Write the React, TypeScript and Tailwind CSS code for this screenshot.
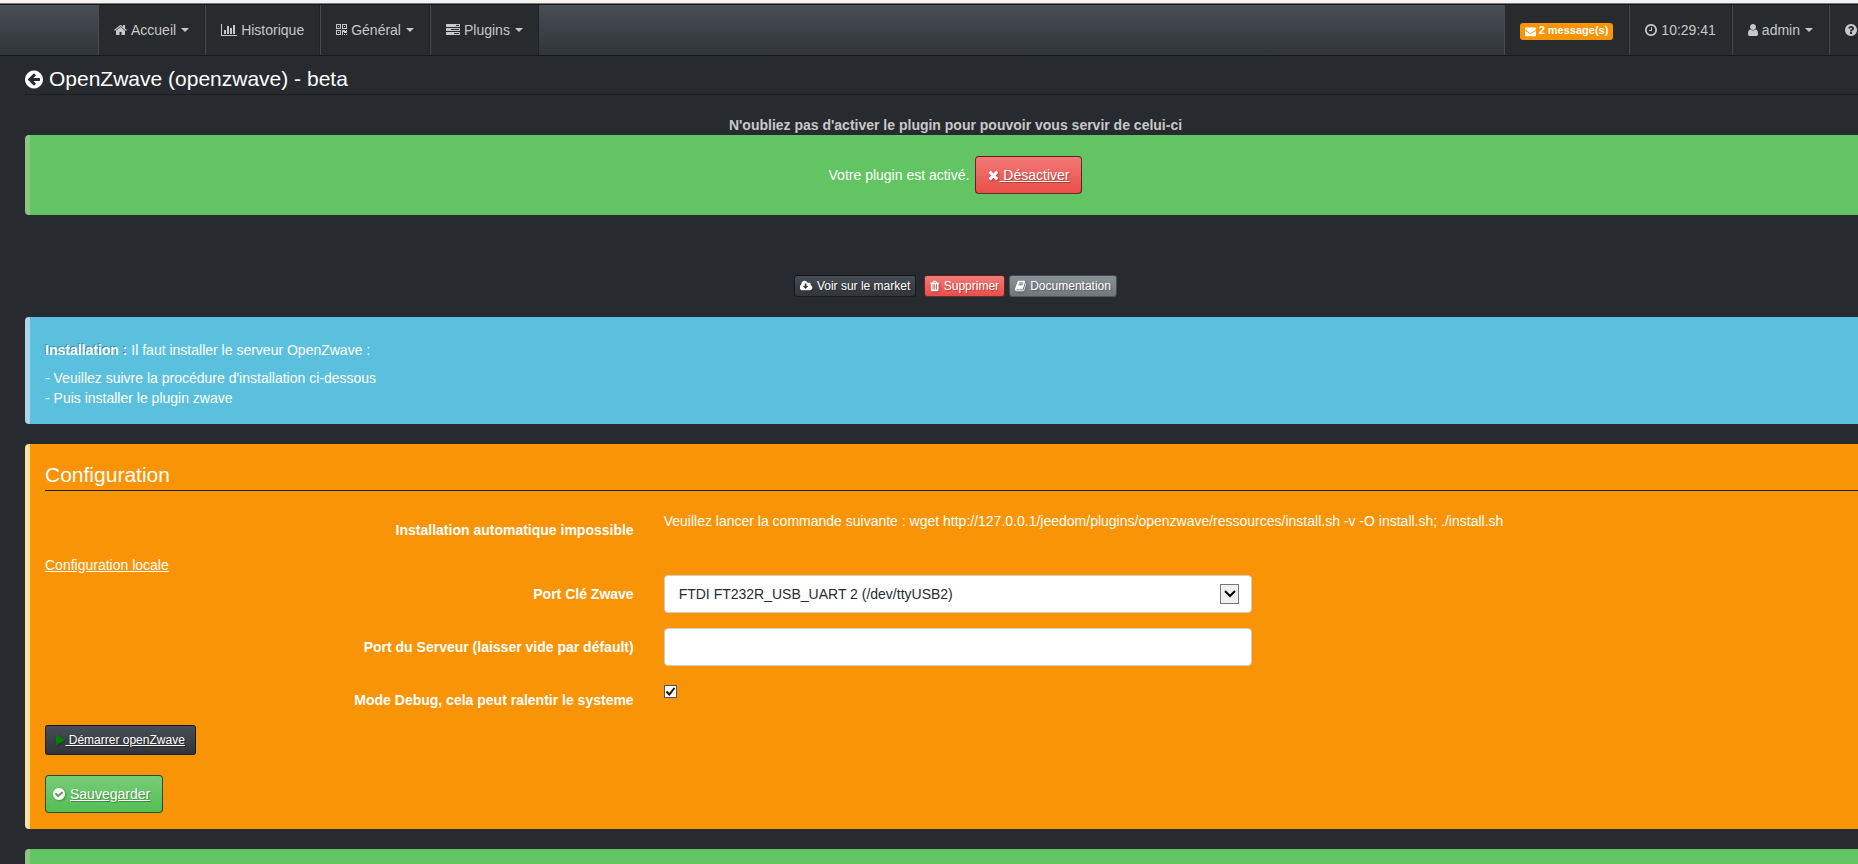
import type { ReactNode } from "react";
import clsx from "clsx";

// Icon outlines share a 1792 unit em; x and w give the horizontal extent of each glyph.
const icons = {
  home: {
    x: 64,
    w: 1664,
    d: "M1472 992v480q0 26-19 45t-45 19h-384v-384h-256v384h-384q-26 0-45-19t-19-45v-480q0-1 .5-3t.5-3l575-474 575 474q1 2 1 6zm223-69l-62 74q-8 9-21 11h-3q-13 0-21-7l-692-577-692 577q-12 8-24 7-13-2-21-11l-62-74q-8-10-7-23.5t11-21.5l719-599q32-26 76-26t76 26l244 204v-195q0-14 9-23t23-9h192q14 0 23 9t9 23v408l219 182q10 8 11 21.5t-7 23.5z",
  },
  chart: {
    x: 0,
    w: 2048,
    d: "M640 896v512h-256v-512h256zm384-512v1024h-256v-1024h256zm1024 1152v128h-2048v-1536h128v1408h1920zm-640-896v768h-256v-768h256zm384-384v1152h-256v-1152h256z",
  },
  qrcode: {
    x: 192,
    w: 1408,
    d: "M576 1152v128h-128v-128h128zm0-768v128h-128v-128h128zm768 0v128h-128v-128h128zm-1024 1023h384v-383h-384v383zm0-767h384v-384h-384v384zm768 0h384v-384h-384v384zm-256 256v640h-640v-640h640zm512 512v128h-128v-128h128zm256 0v128h-128v-128h128zm0-512v384h-384v-128h-128v384h-128v-640h384v128h128v-128h128zm-768-768v640h-640v-640h640zm768 0v640h-640v-640h640z",
  },
  tasks: {
    x: 0,
    w: 1792,
    d: "M1024 1408h640v-128h-640v128zm-384-512h1024v-128h-1024v128zm640-512h384v-128h-384v128zm512 832v256q0 26-19 45t-45 19h-1664q-26 0-45-19t-19-45v-256q0-26 19-45t45-19h1664q26 0 45 19t19 45zm0-512v256q0 26-19 45t-45 19h-1664q-26 0-45-19t-19-45v-256q0-26 19-45t45-19h1664q26 0 45 19t19 45zm0-512v256q0 26-19 45t-45 19h-1664q-26 0-45-19t-19-45v-256q0-26 19-45t45-19h1664q26 0 45 19t19 45z",
  },
  envelope: {
    x: 0,
    w: 1792,
    d: "M1792 710v794q0 66-47 113t-113 47h-1472q-66 0-113-47t-47-113v-794q44 49 101 87 362 246 497 345 57 42 92.5 65.5t94.5 48 110 24.5h2q51 0 110-24.5t94.5-48 92.5-65.5q170-123 498-345 57-39 100-87zm0-294q0 79-49 151t-122 123q-376 261-468 325-10 7-42.5 31t-54 39-52 33.5-57.5 30.5-51.5 15h-2q-26 0-51.5-15t-57.5-30.5-52-33.5-54-39-42.5-31q-91-64-262-182.5t-205-142.5q-62-42-117-115.5t-55-136.5q0-78 41.5-130t118.5-52h1472q65 0 112.5 47t47.5 113z",
  },
  clock: {
    x: 128,
    w: 1536,
    d: "M1024 544v448q0 14-9 23t-23 9h-320q-14 0-23-9t-9-23v-64q0-14 9-23t23-9h224v-352q0-14 9-23t23-9h64q14 0 23 9t9 23zm416 352q0-148-73-273t-198-198-273-73-273 73-198 198-73 273 73 273 198 198 273 73 273-73 198-198 73-273zm224 0q0 209-103 385.5t-279.5 279.5-385.5 103-385.5-103-279.5-279.5-103-385.5 103-385.5 279.5-279.5 385.5-103 385.5 103 279.5 279.5 103 385.5z",
  },
  user: {
    x: 256,
    w: 1280,
    d: "M1536 1399q0 109-62.5 187t-150.5 78h-854q-88 0-150.5-78t-62.5-187q0-85 8.5-160.5t31.5-152 58.5-131 94-89 134.5-34.5q131 128 313 128t313-128q76 0 134.5 34.5t94 89 58.5 131 31.5 152 8.5 160.5zm-256-887q0 159-112.5 271.5t-271.5 112.5-271.5-112.5-112.5-271.5 112.5-271.5 271.5-112.5 271.5 112.5 112.5 271.5z",
  },
  question: {
    x: 128,
    w: 1536,
    d: "M1024 1376v-192q0-14-9-23t-23-9h-192q-14 0-23 9t-9 23v192q0 14 9 23t23 9h192q14 0 23-9t9-23zm256-672q0-88-55.5-163t-138.5-116-170-41q-243 0-371 213-15 24 8 42l132 100q7 6 19 6 16 0 25-12 53-68 86-92 34-24 86-24 48 0 85.5 26t37.5 59q0 38-20 61t-68 45q-63 28-115.5 86.5t-52.5 125.5v36q0 14 9 23t23 9h192q14 0 23-9t9-23q0-19 21.5-49.5t54.5-49.5q32-18 49-28.5t46-35 44.5-48 28-60.5 12.5-81zm384 192q0 209-103 385.5t-279.5 279.5-385.5 103-385.5-103-279.5-279.5-103-385.5 103-385.5 279.5-279.5 385.5-103 385.5 103 279.5 279.5 103 385.5z",
  },
  back: {
    x: 128,
    w: 1536,
    d: "M1408 960v-128q0-26-19-45t-45-19h-502l189-189q19-19 19-45t-19-45l-91-91q-18-18-45-18t-45 18l-362 362-91 91q-18 18-18 45t18 45l91 91 362 362q18 18 45 18t45-18l91-91q18-18 18-45t-18-45l-189-189h502q26 0 45-19t19-45zm256-64q0 209-103 385.5t-279.5 279.5-385.5 103-385.5-103-279.5-279.5-103-385.5 103-385.5 279.5-279.5 385.5-103 385.5 103 279.5 279.5 103 385.5z",
  },
  times: {
    x: 192,
    w: 1408,
    d: "M1490 1322q0 40-28 68l-136 136q-28 28-68 28t-68-28l-294-294-294 294q-28 28-68 28t-68-28l-136-136q-28-28-28-68t28-68l294-294-294-294q-28-28-28-68t28-68l136-136q28-28 68-28t68 28l294 294 294-294q28-28 68-28t68 28l136 136q28 28 28 68t-28 68l-294 294 294 294q28 28 28 68z",
  },
  check: {
    x: 128,
    w: 1536,
    d: "M1412 734q0-28-18-46l-91-90q-19-19-45-19t-45 19l-408 407-226-226q-19-19-45-19t-45 19l-91 90q-18 18-18 46 0 27 18 45l362 362q19 19 45 19 27 0 46-19l543-543q18-18 18-45zm252 162q0 209-103 385.5t-279.5 279.5-385.5 103-385.5-103-279.5-279.5-103-385.5 103-385.5 279.5-279.5 385.5-103 385.5 103 279.5 279.5 103 385.5z",
  },
  play: {
    x: 192,
    w: 1408,
    d: "M1576 927l-1328 738q-23 13-39.5 3t-16.5-36v-1472q0-26 16.5-36t39.5 3l1328 738q23 13 23 31t-23 31z",
  },
  trash: {
    x: 192,
    w: 1408,
    d: "M704 1376v-704q0-14-9-23t-23-9h-64q-14 0-23 9t-9 23v704q0 14 9 23t23 9h64q14 0 23-9t9-23zm256 0v-704q0-14-9-23t-23-9h-64q-14 0-23 9t-9 23v704q0 14 9 23t23 9h64q14 0 23-9t9-23zm256 0v-704q0-14-9-23t-23-9h-64q-14 0-23 9t-9 23v704q0 14 9 23t23 9h64q14 0 23-9t9-23zm-544-992h448l-48-117q-7-9-17-11h-317q-10 2-17 11zm928 32v64q0 14-9 23t-23 9h-96v948q0 83-47 143.5t-113 60.5h-832q-66 0-113-58.5t-47-141.5v-952h-96q-14 0-23-9t-9-23v-64q0-14 9-23t23-9h309l70-167q15-37 54-63t79-26h320q40 0 79 26t54 63l70 167h309q14 0 23 9t9 23z",
  },
  cloud: {
    x: 0,
    w: 1920,
    d: "M1216 928q0-14-9-23t-23-9h-224v-352q0-13-9.5-22.5t-22.5-9.5h-192q-13 0-22.5 9.5t-9.5 22.5v352h-224q-13 0-22.5 9.5t-9.5 22.5q0 14 9 23l352 352q9 9 23 9t23-9l351-351q10-12 10-24zm640 224q0 159-112.5 271.5t-271.5 112.5h-1088q-185 0-316.5-131.5t-131.5-316.5q0-130 70-240t188-165q-2-30-2-43 0-212 150-362t362-150q156 0 285.5 87t188.5 231q71-62 166-62 106 0 181 75t75 181q0 76-41 138 130 31 213.5 135.5t83.5 238.5z",
  },
  book: {
    x: 64,
    w: 1664,
    d: "M1703 478q40 57 18 129l-275 906q-19 64-76.5 107.5t-122.5 43.5h-923q-77 0-148.5-53.5t-99.5-131.5q-24-67-2-127 0-4 3-27t4-37q1-8-3-21.5t-3-19.5q2-11 8-21t16.5-23.5 16.5-23.5q23-38 45-91.5t30-91.5q3-10 .5-30t-.5-28q3-11 17-28t17-23q21-36 42-92t25-90q1-9-2.5-32t.5-28q4-13 22-30.5t22-22.5q19-26 42.5-84.5t27.5-96.5q1-8-3-25.5t-2-26.5q2-8 9-18t18-23 17-21q8-12 16.5-30.5t15-35 16-36 19.5-32 26.5-23.5 36-11.5 47.5 5.5l-1 3q38-9 51-9h761q74 0 114 56t18 130l-274 906q-36 119-71.5 153.5t-128.5 34.5h-869q-27 0-38 15-11 16-1 43 24 70 144 70h923q29 0 56-15.5t35-41.5l300-987q7-22 5-57 38 15 59 43zm-1064 2q-4 13 2 22.5t20 9.5h608q13 0 25.5-9.5t16.5-22.5l21-64q4-13-2-22.5t-20-9.5h-608q-13 0-25.5 9.5t-16.5 22.5zm-83 256q-4 13 2 22.5t20 9.5h608q13 0 25.5-9.5t16.5-22.5l21-64q4-13-2-22.5t-20-9.5h-608q-13 0-25.5 9.5t-16.5 22.5z",
  },
};

type IconName = keyof typeof icons;

function Icon({ name, className = "h-3.5" }: { name: IconName; className?: string }) {
  const { x, w, d } = icons[name];
  return (
    <svg viewBox={`${x} 0 ${w} 1792`} className={clsx("w-auto shrink-0 fill-current", className)} aria-hidden="true">
      <path d={d} />
    </svg>
  );
}

function Caret() {
  return <span className="ml-px border-x-4 border-t-4 border-x-transparent border-t-current" />;
}

function NavItem({ icon, label, caret }: { icon: IconName; label?: string; caret?: boolean }) {
  return (
    <li className="flex border-l border-l-white/15 border-r border-r-black/20 bg-[#272b2e]">
      <a href="#" className="flex items-center gap-1 whitespace-nowrap px-[15px]">
        <Icon name={icon} />
        {label}
        {caret && <Caret />}
      </a>
    </li>
  );
}

const buttonColors = {
  dark: "border-black/60 bg-linear-to-b from-[#484e55] via-[#3a3f44] via-60% to-[#313539]",
  gray: "border-black/40 bg-linear-to-b from-[#8a9196] via-[#7a8288] via-60% to-[#70787d]",
  red: "border-black/60 bg-linear-to-b from-[#f17a77] via-[#ee5f5b] via-60% to-[#ec4d49]",
  green: "border-black/60 bg-linear-to-b from-[#78cc78] via-[#62c462] via-60% to-[#53be53]",
};

const buttonSizes = {
  xs: "h-[22px] rounded-[3px] px-[5px] text-xs",
  sm: "h-[30px] rounded-[3px] px-2.5 text-xs",
  md: "h-[38px] rounded px-3 text-sm",
};

function Button({
  color,
  size,
  className,
  children,
}: {
  color: keyof typeof buttonColors;
  size: keyof typeof buttonSizes;
  className?: string;
  children: ReactNode;
}) {
  return (
    <button
      type="button"
      className={clsx(
        "inline-flex items-center whitespace-nowrap border text-white [text-shadow:1px_1px_1px_rgba(0,0,0,0.3)] [&>svg]:drop-shadow-[1px_1px_1px_rgba(0,0,0,0.3)]",
        buttonColors[color],
        buttonSizes[size],
        className,
      )}
    >
      {children}
    </button>
  );
}

function FormRow({ label, htmlFor, children }: { label: string; htmlFor?: string; children: ReactNode }) {
  return (
    <div className="-mx-[15px] mb-[15px] grid grid-cols-3">
      <label htmlFor={htmlFor} className="px-[15px] pt-[9px] text-right font-bold">
        {label}
      </label>
      {children}
    </div>
  );
}

export default function App() {
  return (
    <div className="flex min-h-screen flex-col overflow-hidden bg-[#272b30] font-['Liberation_Sans',Arial,sans-serif] text-sm text-[#c8c8c8]">
      <div className="h-1 border-b border-[#77777a] bg-[#f4f2f0]" />
      <nav className="-mr-7 flex h-[52px] justify-between border-y border-[#16181b] bg-linear-to-b from-[#484e55] via-[#3a3f44] via-60% to-[#313539] pl-[98px]">
        <ul className="flex">
          <NavItem icon="home" label="Accueil" caret />
          <NavItem icon="chart" label="Historique" />
          <NavItem icon="qrcode" label="Général" caret />
          <NavItem icon="tasks" label="Plugins" caret />
        </ul>
        <ul className="flex">
          <li className="flex border-l border-l-white/15 border-r border-r-black/20 bg-[#272b2e]">
            <a href="#" className="flex items-center px-[15px] pt-0.5">
              <span className="flex h-[17px] items-center gap-[3px] whitespace-nowrap rounded-[3px] bg-[#f89406] px-[5px] text-[11px] font-bold text-white">
                <Icon name="envelope" className="h-[11px]" />2 message(s)
              </span>
            </a>
          </li>
          <NavItem icon="clock" label="10:29:41" />
          <NavItem icon="user" label="admin" caret />
          <NavItem icon="question" caret />
        </ul>
      </nav>

      <main className="-mr-7 ml-[25px] flex grow flex-col pt-2">
        <h1 className="mb-5 flex h-[31px] items-center gap-1.5 border-b border-[#1c1e22] text-[21px] text-white">
          <a href="#" aria-label="Retour">
            <Icon name="back" className="h-[21px]" />
          </a>
          OpenZwave (openzwave) - beta
        </h1>

        <p className="text-center font-bold">N'oubliez pas d'activer le plugin pour pouvoir vous servir de celui-ci</p>
        <section className="flex items-center justify-center gap-1.5 rounded border-l-[5px] border-[#8fc380] bg-[#62c462] py-[21px] pr-[5px] text-white">
          Votre plugin est activé.
          <Button color="red" size="md" className="whitespace-pre">
            <Icon name="times" />
            <span className="underline"> Désactiver</span>
          </Button>
        </section>

        <div className="mt-[60px] flex justify-center gap-1">
          <Button color="dark" size="xs" className="mr-1 gap-1">
            <Icon name="cloud" className="h-3" />
            Voir sur le market
          </Button>
          <Button color="red" size="xs" className="gap-1">
            <Icon name="trash" className="h-3" />
            Supprimer
          </Button>
          <Button color="gray" size="xs" className="gap-1">
            <Icon name="book" className="h-3" />
            Documentation
          </Button>
        </div>

        <section className="mt-5 rounded border-l-[5px] border-[#aed3ee] bg-[#5bc0de] px-[15px] pt-[23px] pb-4 text-white">
          <p className="mb-2">
            <strong className="[text-shadow:-1px_-1px_0_rgba(0,0,0,0.3)]">Installation :</strong> Il faut installer le
            serveur OpenZwave :
          </p>
          <p>
            - Veuillez suivre la procédure d'installation ci-dessous
            <br />- Puis installer le plugin zwave
          </p>
        </section>

        <section className="mt-5 rounded border-l-[5px] border-[#f9dfa0] bg-[#f89406] px-[15px] py-4 text-white">
          <h2 className="mb-5 flex h-[31px] items-center border-b border-[#1c1e22] text-[21px]">Configuration</h2>
          <form>
            <FormRow label="Installation automatique impossible">
              <p className="col-span-2 px-[15px]">
                Veuillez lancer la commande suivante : wget
                http://127.0.0.1/jeedom/plugins/openzwave/ressources/install.sh -v -O install.sh; ./install.sh
              </p>
            </FormRow>
            <a href="#" className="block w-fit underline">
              Configuration locale
            </a>
            <FormRow label="Port Clé Zwave" htmlFor="port">
              <div className="relative mx-[15px]">
                <select
                  id="port"
                  className="h-[38px] w-full appearance-none rounded border border-[#ccc] bg-white px-3.5 text-[#272b30]"
                >
                  <option>FTDI FT232R_USB_UART 2 (/dev/ttyUSB2)</option>
                </select>
                <span className="pointer-events-none absolute top-[9px] right-[13px] flex h-5 w-[19px] items-center justify-center border border-[#777] bg-[#f0f0f0]">
                  <svg viewBox="0 0 12 8" className="h-2 w-3" aria-hidden="true">
                    <path d="M1 1l5 5 5-5" fill="none" stroke="#000" strokeWidth="2" />
                  </svg>
                </span>
              </div>
            </FormRow>
            <FormRow label="Port du Serveur (laisser vide par défault)" htmlFor="server-port">
              <div className="mx-[15px]">
                <input
                  id="server-port"
                  type="text"
                  className="block h-[38px] w-full rounded border border-[#ccc] bg-white px-3 text-[#272b30]"
                />
              </div>
            </FormRow>
            <FormRow label="Mode Debug, cela peut ralentir le systeme" htmlFor="debug">
              <div className="mx-[15px] mt-1 grid h-[13px] w-[13px]">
                <input
                  id="debug"
                  type="checkbox"
                  defaultChecked
                  className="peer col-start-1 row-start-1 h-[13px] w-[13px] appearance-none border border-[#555] bg-white"
                />
                <svg
                  viewBox="0 0 13 13"
                  className="pointer-events-none invisible col-start-1 row-start-1 peer-checked:visible"
                  aria-hidden="true"
                >
                  <path d="M2.5 6.5l2.8 3L10.5 3" fill="none" stroke="#111" strokeWidth="2" />
                </svg>
              </div>
            </FormRow>
            <div className="flex flex-col items-start gap-5">
              <Button color="dark" size="sm" className="whitespace-pre">
                <Icon name="play" className="h-3 text-[#008000]" />
                <span className="underline"> Démarrer openZwave</span>
              </Button>
              <Button color="green" size="md" className="gap-[5px] pl-[7px]">
                <Icon name="check" />
                <span className="underline">Sauvegarder</span>
              </Button>
            </div>
          </form>
        </section>

        <section className="mt-5 min-h-[15px] grow rounded-t border-l-[5px] border-[#8fc380] bg-[#62c462]" />
      </main>
    </div>
  );
}
